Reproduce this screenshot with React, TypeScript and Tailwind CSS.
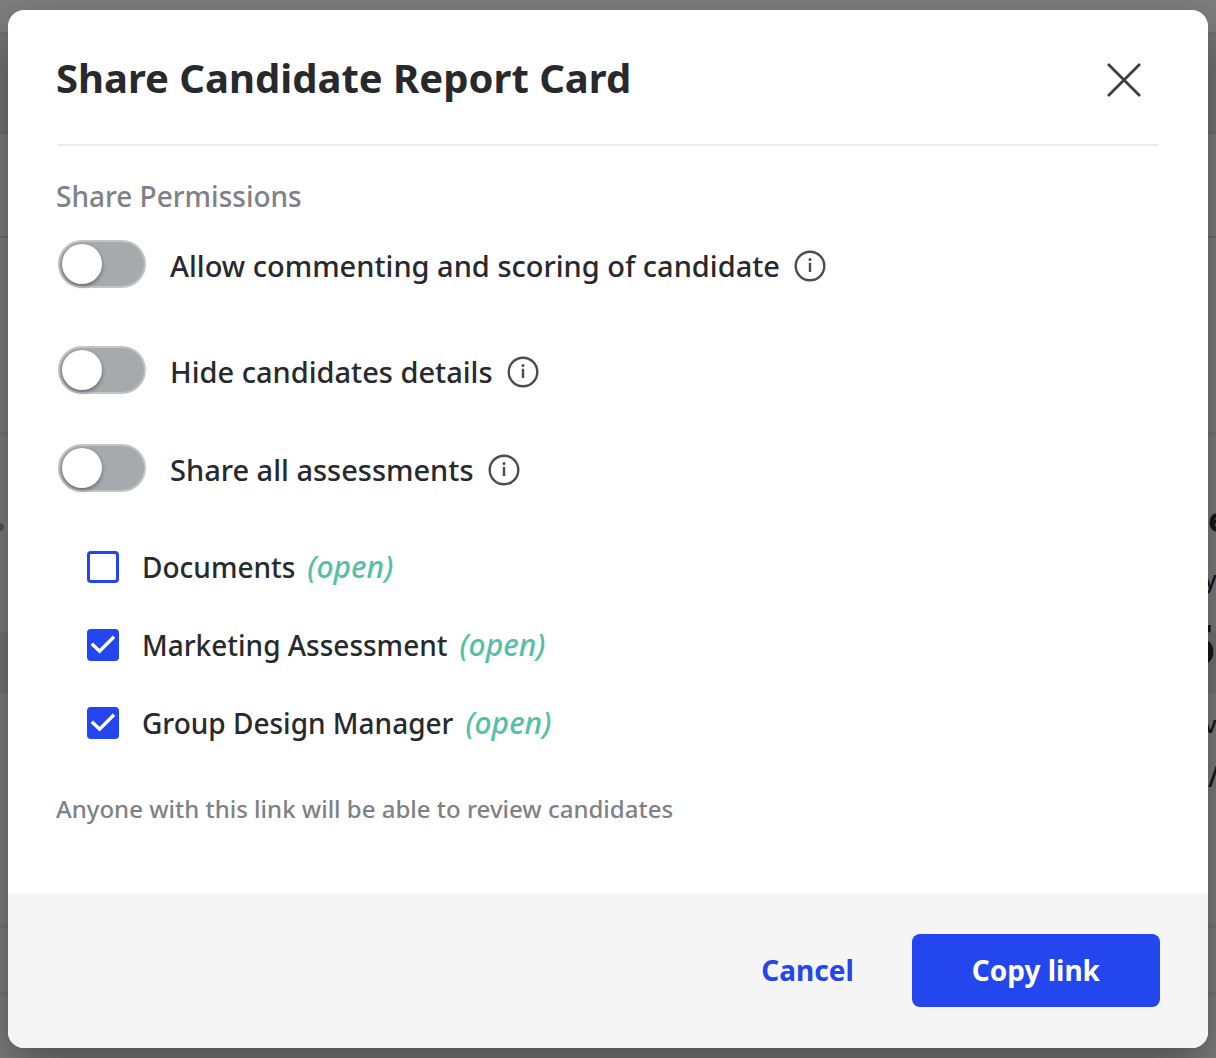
import React, { useState } from 'react';

interface ToggleRowProps {
  id: string;
  label: string;
  checked: boolean;
  onChange: (checked: boolean) => void;
}

interface Assessment {
  id: string;
  name: string;
  status: string;
}

const PERMISSIONS = [
  { id: 'comments', label: 'Allow commenting and scoring of candidate' },
  { id: 'hide', label: 'Hide candidates details' },
  { id: 'all', label: 'Share all assessments' }
];

const ASSESSMENTS: Assessment[] = [
  { id: 'documents', name: 'Documents', status: 'open' },
  { id: 'marketing', name: 'Marketing Assessment', status: 'open' },
  { id: 'design', name: 'Group Design Manager', status: 'open' }
];

function CloseIcon() {
  return (
    <svg className="h-9 w-9" viewBox="0 0 36 36" fill="none" stroke="#3b3c42" strokeWidth="2.8" aria-hidden="true">
      <path d="M2 2L34 34M34 2L2 34" />
    </svg>
  );
}

function InfoIcon() {
  return (
    <svg className="h-8 w-8" viewBox="0 0 32 32" fill="none" aria-hidden="true">
      <circle cx="16" cy="16" r="14.3" stroke="#4b4c50" strokeWidth="2.4" />
      <path d="M16 12.8V22" stroke="#4b4c50" strokeWidth="2.4" />
      <circle cx="16" cy="9.6" r="1.5" fill="#4b4c50" />
    </svg>
  );
}

function CheckIcon() {
  return (
    <svg
      className="pointer-events-none col-start-1 row-start-1 hidden h-8 w-8 peer-checked:block"
      viewBox="0 0 32 32"
      fill="none"
      aria-hidden="true"
    >
      <path d="M4.8 14.8L12.6 22.2L27 7.8" stroke="#fff" strokeWidth="3.4" />
    </svg>
  );
}

function ToggleRow({ id, label, checked, onChange }: ToggleRowProps) {
  return (
    <div className="flex items-end first:mb-2">
      <label htmlFor={id} className="flex items-end gap-6 text-[29px] leading-11 font-medium">
        <span className="grid shrink-0 items-center">
          <input
            id={id}
            type="checkbox"
            role="switch"
            checked={checked}
            onChange={(e) => onChange(e.target.checked)}
            className="peer col-start-1 row-start-1 h-12 w-[88px] appearance-none rounded-full border-2 border-[#c3c4c8] bg-[#a8a9ad] checked:border-[#2346ee] checked:bg-[#2346ee]"
          />
          <span className="pointer-events-none col-start-1 row-start-1 ml-1 h-10 w-10 rounded-full bg-white shadow-[0_2px_4px_rgba(0,0,0,0.4)] peer-checked:ml-11" />
        </span>
        {label}
      </label>
      <button type="button" aria-label={`About: ${label}`} className="ml-3.5 flex h-11 shrink-0 items-center">
        <InfoIcon />
      </button>
    </div>
  );
}

// Dimmed report page that sits under the dialog
function ReportPage() {
  return (
    <div className="grid min-h-screen bg-[#7f7f7f] text-[#17181a]" aria-hidden="true">
      <div className="col-start-1 row-start-1">
        <div className="h-9 border-b-4 border-[#727272]" />
        <div className="h-[98px] border-b-2 border-[#707070] bg-[#767676]" />
        <div className="h-[104px] border-b-2 border-[#707070]" />
        <div className="h-[198px] border-b-4 border-[#787878]" />
        <div className="h-[196px] pt-[87px]">
          <div className="-ml-1 h-2 w-2 rounded-full bg-[#555]" />
        </div>
        <div className="h-[62px] bg-[#767676]" />
        <div className="h-[234px] border-b-4 border-[#787878]" />
        <div className="h-[68px] border-b-4 border-[#787878]" />
      </div>

      <div className="col-start-1 row-start-1 flex w-2 flex-col justify-self-end overflow-hidden pt-[492px]">
        <span className="text-[34px] leading-[54px] font-bold">e</span>
        <span className="-ml-1 text-2xl leading-[66px] font-medium">y</span>
        <span className="-ml-6 text-[56px] leading-[62px] font-bold">5</span>
        <span className="-ml-1 text-2xl leading-[100px] font-medium">v</span>
        <span className="text-[28px] leading-1 font-medium">/</span>
      </div>
    </div>
  );
}

export default function App() {
  const [permissions, setPermissions] = useState<Record<string, boolean>>({});
  const [selected, setSelected] = useState<Record<string, boolean>>({
    marketing: true,
    design: true
  });

  return (
    <div className="grid min-h-screen font-['Noto_Sans','Open_Sans',sans-serif]">
      <div className="col-start-1 row-start-1 overflow-hidden">
        <ReportPage />
      </div>

      <div className="z-10 col-start-1 row-start-1 overflow-hidden px-2 py-2.5">
        <div
          role="dialog"
          aria-modal="true"
          aria-labelledby="share-title"
          className="flex min-h-full flex-col overflow-hidden rounded-2xl bg-white text-[#28292d] shadow-[0_20px_50px_rgba(0,0,0,0.4)]"
        >
          <header className="flex items-end justify-between px-12 pt-10 pb-[38px]">
            <h1 id="share-title" className="text-[40px] leading-14 font-bold">
              Share Candidate Report Card
            </h1>
            <button type="button" aria-label="Close" className="mr-[18px] pb-2">
              <CloseIcon />
            </button>
          </header>
          <hr className="mx-[50px] border-t-2 border-[#ebebeb]" />

          <main className="grow px-12 pt-[30px] pb-16">
            <h2 className="text-[28px] leading-10 font-medium text-[#808186]">Share Permissions</h2>

            <div className="mt-6 flex flex-col gap-[50px] pl-0.5">
              {PERMISSIONS.map((permission) => (
                <ToggleRow
                  key={permission.id}
                  id={permission.id}
                  label={permission.label}
                  checked={!!permissions[permission.id]}
                  onChange={(checked) => setPermissions((prev) => ({ ...prev, [permission.id]: checked }))}
                />
              ))}
            </div>

            <ul className="mt-[55px] flex flex-col gap-[38px] pl-[31px]">
              {ASSESSMENTS.map((assessment) => (
                <li key={assessment.id}>
                  <label className="flex items-center gap-[23px] text-[28px] leading-10 font-medium">
                    <span className="grid shrink-0">
                      <input
                        type="checkbox"
                        checked={!!selected[assessment.id]}
                        onChange={(e) => setSelected((prev) => ({ ...prev, [assessment.id]: e.target.checked }))}
                        className="peer col-start-1 row-start-1 h-8 w-8 appearance-none rounded-sm border-[3px] border-[#2346ee] checked:bg-[#2346ee]"
                      />
                      <CheckIcon />
                    </span>
                    <span className="flex items-baseline gap-3">
                      {assessment.name}
                      <em className="text-[30px] text-[#57bfa5]">({assessment.status})</em>
                    </span>
                  </label>
                </li>
              ))}
            </ul>

            <p className="mt-12 text-2xl leading-9 font-medium text-[#808186]">
              Anyone with this link will be able to review candidates
            </p>
          </main>

          <footer className="flex items-center justify-end gap-[58px] bg-[#f5f5f5] px-12 py-[41px] text-[28px] leading-[41px] font-bold">
            <button type="button" className="text-[#2346ee]">
              Cancel
            </button>
            <button type="button" className="rounded-lg bg-[#2346ee] px-[60px] py-4 text-white">
              Copy link
            </button>
          </footer>
        </div>
      </div>
    </div>
  );
}
